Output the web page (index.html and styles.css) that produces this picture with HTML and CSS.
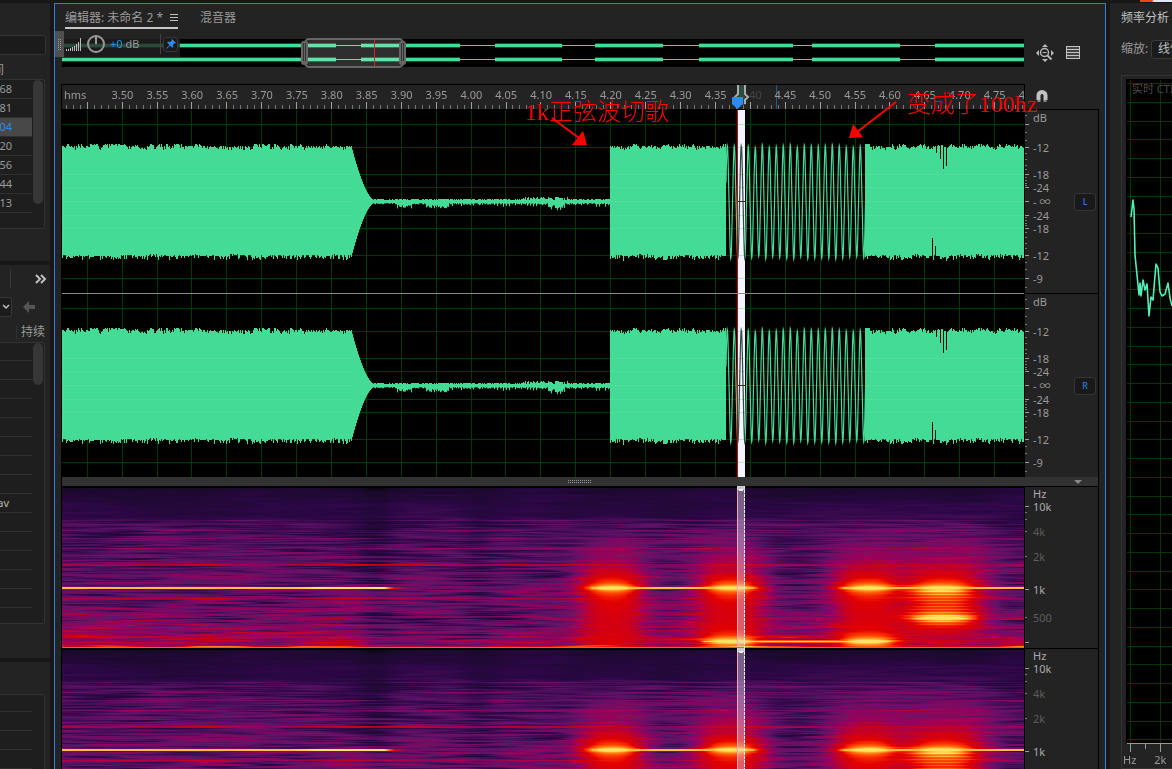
FILE: index.html
```html
<!DOCTYPE html>
<html lang="zh-CN">
<head>
<meta charset="utf-8">
<title>编辑器</title>
<link rel="stylesheet" href="styles.css">
</head>
<body>
<div class="workspace">
  <aside class="side">
    <section class="panel files">
      <input class="search" type="text" aria-label="搜索">
      <div class="files-head">间</div>
      <div class="box file-box">
        <table class="rows">
          <tbody>
            <tr><td><div class="num">68</div></td></tr>
            <tr><td><div class="num">81</div></td></tr>
            <tr class="selected"><td><div class="num">04</div></td></tr>
            <tr><td><div class="num">20</div></td></tr>
            <tr><td><div class="num">456</div></td></tr>
            <tr><td><div class="num">444</div></td></tr>
            <tr><td><div class="num">13</div></td></tr>
          </tbody>
        </table>
        <div class="thumb"></div>
      </div>
    </section>
    <section class="panel media">
      <div class="media-tabs"><button class="icon-btn" aria-label="更多"><svg width="12" height="10" viewBox="0 0 12 10"><path d="M1 1l4 4-4 4M6 1l4 4-4 4" fill="none" stroke="#c0c0c0" stroke-width="2"/></svg></button></div>
      <div class="media-tools">
        <button class="drop" aria-label="驱动器"><svg width="8" height="6" viewBox="0 0 8 6"><path d="M1 1l3 3 3-3" fill="none" stroke="#c0c0c0" stroke-width="1.5"/></svg></button>
        <button class="icon-btn" aria-label="后退"><svg width="12" height="12" viewBox="0 0 12 12"><path d="M0 6l6-6v4h6v4H6v4z" fill="#555"/></svg></button>
      </div>
      <div class="media-head"><span>持续时间</span></div>
      <div class="box media-box">
        <table class="rows">
          <tbody>
            <tr><td></td></tr><tr><td></td></tr><tr><td></td></tr><tr><td></td></tr>
            <tr><td></td></tr><tr><td></td></tr><tr><td></td></tr><tr><td></td></tr>
            <tr><td><div class="num bright">av</div></td></tr>
            <tr><td></td></tr><tr><td></td></tr><tr><td></td></tr><tr><td></td></tr><tr><td></td></tr>
          </tbody>
        </table>
        <div class="thumb short"></div>
      </div>
    </section>
    <section class="panel history">
      <div class="box history-box">
        <table class="rows"><tbody><tr><td></td></tr><tr><td></td></tr><tr><td></td></tr><tr><td></td></tr><tr><td></td></tr></tbody></table>
      </div>
    </section>
  </aside>

  <main class="editor">
    <nav class="tabs">
      <div class="tab active"><button class="tab-name">编辑器: 未命名 2 *</button><button class="icon-btn" aria-label="菜单"><svg width="8" height="8" viewBox="0 0 8 8"><path d="M0 .5h8M0 3.5h8M0 6.5h8" stroke="#bdbdbd"/></svg></button></div>
      <button class="tab-name">混音器</button>
    </nav>

    <div class="overview-row">
      <canvas class="overview" id="overview"></canvas>
      <div class="overview-tools">
        <button class="icon-btn" aria-label="全部缩小"><svg width="18" height="18" viewBox="0 0 18 18"><path d="M9 0l3 3H6zM9 18l3-3H6zM0 9l3-3v6zM18 9l-3-3v6z" fill="#b8b8b8"/><circle cx="8.500" cy="8.500" r="4" fill="none" stroke="#b8b8b8" stroke-width="1.400"/><path d="M6.500 8.500h4" stroke="#b8b8b8"/><path d="M11.500 11.500l4 4" stroke="#b8b8b8" stroke-width="2"/></svg></button>
        <button class="icon-btn" aria-label="频谱显示"><svg width="14" height="14" viewBox="0 0 14 14"><rect x=".5" y=".5" width="13" height="12" fill="#444" stroke="#c4c4c4"/><path d="M1 3.500h12M1 6.500h12M1 9.500h12" stroke="#c4c4c4"/></svg></button>
      </div>
    </div>

    <div class="ruler-row">
      <div class="ruler">
        <canvas class="fill" id="ruler"></canvas>
        <span class="unit">hms</span>
        <div class="times" id="times"></div>
      </div>
      <button class="icon-btn magnet" aria-label="吸附"><svg width="12" height="13" viewBox="0 0 12 13"><path d="M2.500 10V5.500a3.500 3.500 0 0 1 7 0V10" fill="none" stroke="#c2c2c2" stroke-width="4"/><path d="M1.500 11h3M7.500 11h3" stroke="#888" stroke-width="2"/></svg></button>
    </div>

    <div class="stage">
      <div class="channel">
        <canvas class="wave" data-wave="11"></canvas>
        <div class="scale">
          <canvas class="ticks" data-ticks="db"></canvas>
          <ol class="db"><li>dB</li><li>-12</li><li>-18</li><li>-24</li><li>- ∞</li><li>-24</li><li>-18</li><li>-12</li><li>-9</li></ol>
          <button class="chan left">L</button>
        </div>
      </div>
      <div class="channel">
        <canvas class="wave" data-wave="11"></canvas>
        <div class="scale">
          <canvas class="ticks" data-ticks="db"></canvas>
          <ol class="db"><li>dB</li><li>-12</li><li>-18</li><li>-24</li><li>- ∞</li><li>-24</li><li>-18</li><li>-12</li><li>-9</li></ol>
          <button class="chan">R</button>
        </div>
      </div>
      <div class="splitter"><i class="grip"></i><svg width="8" height="4" viewBox="0 0 8 4"><path d="M0 0h8L4 4z" fill="#888"/></svg></div>
      <div class="channel spectral">
        <canvas class="spectrum"></canvas>
        <div class="scale">
          <canvas class="ticks" data-ticks="hz"></canvas>
          <ol class="hz"><li>Hz</li><li>10k</li><li class="dim">4k</li><li class="dim">2k</li><li>1k</li><li class="dim">500</li></ol>
        </div>
      </div>
      <div class="channel spectral">
        <canvas class="spectrum"></canvas>
        <div class="scale">
          <canvas class="ticks" data-ticks="hz"></canvas>
          <ol class="hz"><li>Hz</li><li>10k</li><li class="dim">4k</li><li class="dim">2k</li><li>1k</li><li class="dim">500</li></ol>
        </div>
      </div>
    </div>

    <div class="hud">
      <i class="hud-grip"></i>
      <svg width="17" height="15" viewBox="0 0 17 15"><path d="M1.500 14v-2M3.500 14v-2M5.500 14v-3M7.500 14v-4M9.500 14V9M11.500 14V7M13.500 14V5M15.500 14V1" stroke="#bcbcbc" stroke-width="1"/></svg>
      <svg width="20" height="20" viewBox="0 0 20 20"><circle cx="10" cy="10" r="8" fill="none" stroke="#989898" stroke-width="2"/><path d="M10 2v8" stroke="#989898" stroke-width="2"/></svg>
      <span class="gain"><b>+0</b> dB</span>
      <button class="pin" aria-label="固定"><svg width="10" height="10" viewBox="0 0 10 10"><path d="M6 0l4 4-1 .5-.7-.2L7 6l.2 2-.8.8L4 6.500 1 9.500 0 10 .5 9l3-3L1.200 3.600 2 2.800 4 3l1.700-1.300L5.500 1z" fill="#2d8ceb"/></svg></button>
    </div>

    <div class="note first">1k正弦波切歌</div>
    <div class="note second">变成了100hz</div>
    <svg class="arrow one" width="36" height="30" viewBox="0 0 36 30"><path d="M1 2l27 20" stroke="#f00" stroke-width="2"/><path d="M36 29H21L32 15z" fill="#f00"/></svg>
    <svg class="arrow two" width="48" height="40" viewBox="0 0 48 40"><path d="M47 2L8 32" stroke="#f00" stroke-width="2"/><path d="M0 38L4 24l10 13z" fill="#f00"/></svg>
  </main>

  <aside class="analysis">
    <h2>频率分析</h2>
    <div class="zoom"><label for="zoom">缩放:</label><select id="zoom"><option>线性</option></select></div>
    <div class="graph">
      <canvas class="fill" id="freq"></canvas>
      <span class="live">实时 CTI</span>
      <div class="graph-axis"><span>Hz</span><span>2k</span></div>
    </div>
  </aside>
  <div class="behind"></div>
</div>
<script src="app.js"></script>
</body>
</html>
```
FILE: styles.css
```css
* { box-sizing: border-box; }
body {
  margin: 0;
  background: #171717;
  color: #9a9a9a;
  font: 12px/16px "Noto Sans", "Noto Sans CJK SC", sans-serif;
  overflow: hidden;
}
button, input, select { font: inherit; color: inherit; margin: 0; padding: 0; border: 0; background: none; }
canvas, svg { display: block; }
.icon-btn { display: grid; place-items: center; }

.workspace {
  position: relative;
  display: grid;
  grid-template-columns: 50px minmax(0, 1fr) 62px;
  column-gap: 4px;
  height: 100vh;
  padding-top: 3px;
}
.behind {
  position: absolute;
  top: 0;
  right: 0;
  width: 32px;
  height: 2px;
  background: linear-gradient(90deg, #e8480c 12px, #dfe6f2 14px);
}

/* left column */
.side { display: flex; flex-direction: column; gap: 4px; overflow: hidden; }
.panel { background: #232323; flex: none; overflow: hidden; }
.box {
  position: relative;
  width: 45px;
  overflow: hidden;
  background: #1e1e1e;
  border: 1px solid #333;
  border-left: 0;
  border-radius: 0 3px 3px 0;
}
.files { height: 258px; padding-top: 32px; }
.search {
  display: block;
  width: 46px;
  height: 20px;
  background: #1b1b1b;
  border: 1px solid #333;
  border-left: 0;
  border-radius: 0 3px 3px 0;
}
.files-head { width: 45px; height: 19px; margin-top: 5px; line-height: 19px; border-right: 1px solid #1e1e1e; text-indent: -8px; }
.file-box { height: 150px; }
.rows { width: 32px; border-collapse: collapse; }
.rows td { height: 19px; padding: 0; border-bottom: 1px solid #2f2f2f; }
.file-box .rows tr:first-child td { height: 18px; }
.num { display: flex; justify-content: flex-end; width: 12px; font-size: 11px; line-height: 16px; }
.num.bright { width: 9px; color: #b8b8a8; }
.selected { background: #484848; color: #2d8ceb; }
.thumb { position: absolute; top: 0; right: 1px; width: 10px; height: 124px; border-radius: 5px; background: #373737; }
.thumb.short { height: 42px; }

.media { height: 393px; padding-top: 4px; }
.media-tabs { display: flex; justify-content: flex-end; height: 19px; width: 37px; margin-left: 10px; border-left: 1px solid #383838; }
.media-tools { display: flex; align-items: center; gap: 11px; height: 20px; margin-top: 9px; }
.drop { display: grid; place-items: center; width: 12px; height: 20px; background: #1b1b1b; border: 1px solid #383838; border-left: 0; border-radius: 0 3px 3px 0; }
.media-head { width: 29px; height: 14px; margin: 8px 0 0 16px; padding-left: 4px; border-left: 1px solid #303030; line-height: 14px; overflow: hidden; white-space: nowrap; }
.media-box { height: 282px; margin-top: 3px; }
.media-box .rows tr:first-child td { height: 17px; }
.history { flex: 1; padding-top: 32px; }
.history-box { height: 120px; }
.history-box .rows tr:first-child td { height: 16px; }

/* editor */
.editor {
  position: relative;
  min-width: 0;
  overflow: hidden;
  background: #232323;
  border: 1px solid #2f80dc;
  border-bottom: 0;
  padding: 0 6px;
}
.tabs { display: flex; align-items: flex-start; gap: 22px; height: 35px; padding: 4px 0 0 4px; }
.tab { display: flex; gap: 7px; height: 21px; border-bottom: 2px solid #c8c8c8; }
.tab-name { line-height: 20px; height: 20px; white-space: nowrap; }
.tabs .icon-btn { height: 20px; }
.overview-row { display: flex; height: 28px; padding-left: 1px; }
.overview { flex: 1; min-width: 0; height: 30px; margin-top: -1px; }
.overview-tools { display: flex; align-items: center; gap: 12px; width: 75px; padding-left: 12px; }
.ruler-row { display: flex; margin-top: 17px; }
.ruler { position: relative; flex: 1; min-width: 0; height: 25px; overflow: hidden; border: 1px solid #000; border-bottom: 0; }
.fill { position: absolute; inset: 0; width: 100%; height: 100%; }
.unit { position: absolute; left: 2px; top: 2px; font-size: 11px; }
.times { position: relative; display: grid; grid-auto-flow: column; grid-auto-columns: 1fr; margin: 2px -23px 0 43px; font-size: 11px; text-align: center; }
.times .muted { color: #444; padding-left: 10px; }
.magnet { width: 74px; padding-right: 40px; }

.stage { border-left: 1px solid #000; border-right: 1px solid #000; }
.channel { display: flex; height: 184px; }
.wave, .spectrum { flex: 1; min-width: 0; height: 100%; }
.scale { position: relative; width: 74px; border-top: 1px solid #000; border-left: 1px solid #000; }
.ticks { position: absolute; left: 0; top: -1px; width: 5px; height: 184px; }
.spectral .ticks { height: 162px; }
.db, .hz { display: grid; align-items: center; margin: -1px 0 0; padding: 0 0 0 8px; list-style: none; font-size: 11px; line-height: 14px; }
.db { grid-template-rows: 18px 42px 12px 14px 14px 14px 12px 42px 4px; }
.hz { grid-template-rows: 16px 10px 40px 10px 56px 0px; color: #aaa; }
.db li, .hz li { height: 14px; }
.hz li { margin: -2px 0; }
.hz .dim { color: #5c5c5c; }
.chan { position: absolute; top: 83px; right: 2px; width: 22px; height: 18px; border: 1px solid #353535; border-radius: 3px; background: #191919; color: #2d8ceb; font-size: 9px; line-height: 16px; }
.splitter { position: relative; display: flex; align-items: center; justify-content: flex-end; height: 9px; padding-right: 16px; background: #323232; }
.grip, .hud-grip::before {
  position: absolute;
  background: repeating-linear-gradient(90deg, #999 0 1px, transparent 1px 2px);
  -webkit-mask: repeating-linear-gradient(#000 0 1px, transparent 1px 2px);
  mask: repeating-linear-gradient(#000 0 1px, transparent 1px 2px);
}
.grip { left: calc(50% - 12px); top: 3px; width: 24px; height: 3px; }
.spectral { height: 162px; }

.hud { position: absolute; left: 0; top: 27px; display: flex; align-items: center; width: 125px; height: 26px; background: rgba(35, 35, 35, .78); }
.hud-grip { position: relative; align-self: stretch; width: 9px; margin-right: 1px; background: #505050; }
.hud-grip::before { content: ""; left: 3px; top: 8px; width: 3px; height: 11px; }
.gain { flex: 1; margin-left: 4px; font-size: 11px; white-space: nowrap; border-right: 1px solid #444; line-height: 20px; }
.gain b { font-weight: 400; color: #2d8ceb; }
.pin { display: grid; place-items: center; width: 15px; height: 15px; margin: 0 2px; border: 1px solid #383838; border-radius: 3px; background: #1b1b1b; }
.hud svg:nth-of-type(2) { margin-left: 4px; }

.note { position: absolute; color: #f00; font: 300 24px/28px "Liberation Serif", "Noto Sans CJK SC", serif; white-space: nowrap; }
.note.first { left: 470px; top: 94px; }
.note.second { left: 852px; top: 86px; }
.arrow { position: absolute; }
.arrow.one { left: 496px; top: 112px; }
.arrow.two { left: 794px; top: 96px; }

/* right column */
.analysis { display: flex; flex-direction: column; overflow: hidden; background: #232323; padding-left: 11px; }
.analysis h2 { margin: 7px 0 0; font: inherit; color: #c0c0c0; white-space: nowrap; }
.zoom { display: flex; align-items: center; height: 20px; margin-top: 13px; white-space: nowrap; }
.zoom label { flex: none; width: 30px; }
.zoom select { flex: none; width: 60px; height: 19px; padding-left: 6px; border: 1px solid #3a3a3a; border-radius: 3px; background: #1b1b1b; color: #c0c0c0; appearance: none; }
.graph { position: relative; flex: 1; margin-top: 16px; border: solid #333; border-width: 1px 0 1px 1px; overflow: hidden; }
.live { position: absolute; left: 10px; top: 5px; color: #4c4c4c; font-size: 11px; white-space: nowrap; }
.graph-axis { position: absolute; left: 1px; bottom: 0; display: flex; gap: 18px; font-size: 11px; line-height: 16px; }
```
FILE: app.js
```js
const GREEN = '#44db97';
const SPAN = 962;      // timeline units across the view
const STEP = 34.9;     // units per 0.05 s
const FIRST = 24.7;    // first major division

function noise(n) {
  const s = Math.sin(n * 127.1 + 11.7) * 43758.5453;
  return s - Math.floor(s);
}
function hash(x, y) {
  let h = (Math.imul(x, 374761393) + Math.imul(y, 668265263)) | 0;
  h = Math.imul(h ^ (h >>> 13), 1274126177);
  return ((h ^ (h >>> 16)) >>> 0) / 4294967296;
}
function openCanvas(canvas, span) {
  canvas.width = canvas.clientWidth;
  canvas.height = canvas.clientHeight;
  const c = canvas.getContext('2d');
  if (span) c.scale(canvas.width / span, 1);
  c.rect2 = (color, x, y, w, h) => { c.fillStyle = color; c.fillRect(x, y, w, h); };
  return c;
}

function drawOverview() {
  const c = openCanvas(document.getElementById('overview'), SPAN);
  c.rect2('#000', 0, 1, SPAN, 28);
  const thick = [[0, 274], [299, 398], [433, 500], [533, 601], [637, 731], [750, 838], [873, 962]];
  for (const y of [7, 21]) {
    c.rect2(GREEN, 0, y, SPAN, 1);
    for (const [a, b] of thick) {
      c.rect2('#174b35', a, y - 2, b - a, 5);
      c.rect2(GREEN, a, y - 1, b - a, 3);
    }
  }
  c.fillStyle = 'rgba(255,255,255,.18)';
  c.beginPath(); c.roundRect(243, 1, 98, 28, 4); c.fill();
  c.strokeStyle = '#666'; c.lineWidth = 2; c.stroke();
  for (const x of [240, 338]) {
    c.fillStyle = '#666';
    c.beginPath(); c.roundRect(x - 1, 3, 7, 24, 3); c.fill();
    c.rect2('#333', x + 1, 5, 1, 18);
    c.rect2('#333', x + 3, 5, 1, 18);
  }
  c.rect2('#d22', 312, 2, 1, 26);
}

function drawRuler() {
  const c = openCanvas(document.getElementById('ruler'), SPAN);
  for (let i = 0; i < 140; i++) {
    const x = Math.round(FIRST - STEP + i * STEP / 5);
    const major = i % 5 === 0;
    c.rect2(major ? '#a0a0a0' : '#777', x, major ? 17 : 20, 1, major ? 7 : 4);
  }
  c.rect2('#2b4a40', 676, 0, 7, 20);
  c.strokeStyle = '#a9aca9'; c.lineWidth = 2;
  c.beginPath();
  c.moveTo(676, 0); c.lineTo(676, 9); c.lineTo(673, 12); c.lineTo(676, 15);
  c.moveTo(683, 0); c.lineTo(683, 9); c.lineTo(686, 12); c.lineTo(683, 15); c.lineTo(683, 19);
  c.stroke();
  c.fillStyle = '#2d8ceb';
  c.beginPath(); c.moveTo(670, 12); c.lineTo(681, 12); c.lineTo(681, 19); c.lineTo(675.5, 24); c.lineTo(670, 19); c.fill();
  c.rect2('#23588f', 714, 0, 1, 24);
}

function drawWave(canvas) {
  const c = openCanvas(canvas, SPAN);
  const rows = [15, 38, 65, 78, 106, 119, 146, 169];
  const seed = +canvas.dataset.wave;
  c.rect2('#000', 0, 0, SPAN, 184);
  for (const y of rows) c.rect2('#003a00', 0, y, SPAN, 1);
  for (let i = 0; i < 28; i++) c.rect2('#003a00', Math.round(FIRST + i * STEP), 0, 1, 184);
  c.rect2('#900', 664, 92, 140, 1);
  for (let x = 0; x < SPAN; x++) {
    const a = noise(x + seed), b = noise(x * 1.7 + seed + 500);
    let top, bottom;
    if (x < 289 || (x >= 548 && x < 664) || x >= 803) {
      top = 37 + Math.round(a * a * 4 - (noise(x >> 2) > .6 ? 2 : 0));
      bottom = 145 + Math.round(b * b * 5 + noise((x >> 3) + 9) * 2);
      if (x >= 803 && x < 806) top = 35;
    } else if (x < 312) {
      const t = Math.min(1, (312 - x) / 23);
      const amp = 54 * Math.pow(t, 1.65) + 1;
      top = 92 - amp; bottom = 93 + amp;
    } else if (x < 548) {
      const blob = (x > 334 && x < 350) || (x > 363 && x < 387) || (x > 486 && x < 503);
      const fray = x > 387 && x % 3 === 0;
      top = 91 - Math.round(a * (x > 505 || x < 460 ? 1.4 : 3));
      bottom = 94 + (blob ? 2 + a * 2 : 0) + (fray ? a * 4 : a * 1.5);
    } else continue;
    c.rect2(GREEN, x, top, 1.05, bottom - top);
  }
  for (const y of [65, 78, 92, 106, 119]) {
    for (const [a, w] of [[0, 290], [548, 116], [803, 159]]) c.rect2('rgba(255,255,150,.08)', a, y, w, 1);
  }
  for (const [x, y, h] of [[874, 36, 8], [878, 36, 14], [881, 36, 24], [884, 36, 21], [870, 129, 24], [873, 137, 15]]) c.rect2('#001008', x, y, 1, h);

  const pulse = color => {
    c.strokeStyle = color; c.lineWidth = 1.2; c.beginPath();
    for (let x = 664; x <= 804; x += .25) {
      const v = Math.cos((x - 672.3) / 7 * Math.PI * 2);
      const shaped = Math.sign(v) * Math.pow(Math.abs(v), 1.15);
      c.lineTo(x, 93 - shaped * (54 + noise(Math.floor((x - 672) / 7)) * 3));
    }
    c.stroke();
  };
  pulse(GREEN);
  c.save(); c.beginPath(); c.rect(676, 0, 7, 184); c.clip();
  c.rect2('#f5f5ff', 676, 1, 7, 183);
  for (const y of rows) c.rect2('#c6dfca', 676, y, 7, 1);
  c.rect2('#700', 676, 92, 7, 1);
  pulse('#2b4a44');
  c.restore();
  c.rect2('#c00', 675, 1, 1, 183);
  c.rect2(canvas === document.querySelector('.wave') ? '#000' : '#8a8a8a', 0, 0, SPAN, 1);
}

const stops = [[0, 0, 0, 0], [.08, 23, 10, 38], [.2, 44, 7, 70], [.35, 98, 18, 104], [.5, 158, 0, 88], [.62, 200, 0, 30], [.7, 226, 0, 0], [.78, 255, 62, 0], [.86, 255, 146, 30], [.93, 255, 222, 82], [1, 255, 240, 140]];
function heat(v) {
  v = Math.max(0, Math.min(.95, v));
  let i = 1;
  while (v > stops[i][0]) i++;
  const a = stops[i - 1], b = stops[i], t = (v - a[0]) / (b[0] - a[0]);
  return [a[1] + (b[1] - a[1]) * t, a[2] + (b[2] - a[2]) * t, a[3] + (b[3] - a[3]) * t];
}
function streak(x, y, len) {
  const p = (x + hash(y, 7) * 400) / len, i = Math.floor(p), t = p - i, s = t * t * (3 - 2 * t);
  return hash(i, y) * (1 - s) + hash(i + 1, y) * s;
}
const ramp = (v, a, b) => Math.max(0, Math.min(1, (v - a) / (b - a)));
const bell = (d, p = 2) => Math.exp(-Math.pow(Math.abs(d), p));
const tones = { 34: .07, 38: .08, 44: .09, 52: .1, 62: .16, 78: .23, 79: .2, 111: .1, 112: .16, 141: .08, 150: .1, 151: .1, 159: .12, 160: .26 };
function level(x, y) {
  if (y < 2) return 0;
  const depth = ramp(y, 28, 40);
  let v = .12 + .07 * ramp(y, 2, 20) + .06 * depth + .08 * ramp(y, 40, 90) + .06 * ramp(y, 100, 130) + .1 * ramp(y, 136, 152);
  const rough = .03 + .08 * depth + .08 * ramp(y, 50, 130);
  v += (streak(x, y, 34) - .5) * rough * 1.2 + (streak(x, (y >> 1) + 900, 46) - .5) * rough * 1.1;
  v += (streak(x, (y >> 4) + 1900, 60) - .5) * .06;
  if (tones[y]) v += tones[y] * (.6 + .6 * streak(x, y + 3000, 80));
  v -= (.05 + .03 * depth) * bell((x - 313) / 18) + (.03 + .04 * depth) * bell((x - 417) / 17);
  v -= .08 * ramp(x, 300, 330) * (1 - ramp(x, 440, 520)) * ramp(y, 105, 140);

  const main = Math.abs(y - 101.5);
  for (const [cx, w] of [[550, 36], [668, 38], [805, 38], [880, 46]]) {
    const dx = Math.abs(x - cx) / w;
    if (dx > 1.7) continue;
    const body = bell(dx, 3);
    const vert = y < 101 ? bell(main / 38, 1.8) : cx === 880 ? 1 - ramp(y, 138, 157) * .5 : .98;
    v += body * vert * Math.max(0, .67 - v) * .97;
    v += .22 * Math.exp(-main / 9) * bell(dx * 1.1) + .14 * Math.exp(-main / 2.5) * bell(dx, 4);
  }
  if (y > 103 && y < 146) v += bell((x - 880) / 42, 4) * .11 * (y % 3 === 0 ? 1 : .45) * (1 - ramp(y, 135, 146));
  const d5 = Math.abs(y - 131.5);
  v += .32 * Math.exp(-d5 / 4) * bell((x - 880) / 36);
  if (d5 < 1.6) v = Math.max(v, .92 * bell((x - 880) / 50, 4));
  const low = Math.abs(y - 155);
  for (const cx of [668, 805]) v += .34 * Math.exp(-low / 6) * bell((x - cx) / 32, 3);
  if (low < 1.6) v = Math.max(v, (low < .6 ? .93 : .8) * ramp(x, 620, 642) * (1 - ramp(x, 827, 846)));
  if (main < 1) {
    const on = Math.max(1 - ramp(x, 318, 348), ramp(x, 508, 530) * (1 - ramp(x, 690, 710)), ramp(x, 760, 782));
    v = Math.max(v, .35 + .55 * on);
  }
  return v + .3 * Math.exp(-main / 1.5) * bell((x - 295) / 32);
}
function drawSpectrum(canvas) {
  const c = openCanvas(canvas);
  const w = canvas.width, h = canvas.height, img = c.createImageData(w, h);
  for (let y = 0; y < h; y++) for (let x = 0; x < w; x++) {
    const u = Math.floor(x / w * SPAN), [r, g, b] = heat(level(u, y)), o = (y * w + x) * 4;
    img.data[o] = r; img.data[o + 1] = g; img.data[o + 2] = b; img.data[o + 3] = 255;
  }
  c.putImageData(img, 0, 0);
  c.scale(w / SPAN, 1);
  c.rect2('#8a8080', 0, h - 1, SPAN, 1);
  c.rect2('rgba(225,215,235,.43)', 676, 0, 7, h - 1);
  c.rect2('#f6a8b4', 675, 0, 1, h - 1);
  for (let y = 0; y < h; y += 4) c.rect2('#eee', 682, y, 1, 3);
  c.rect2('rgba(225,225,230,.8)', 675, 0, 8, 4);
  c.rect2('#eee', 677, 3, 4, 2);
}

function drawTicks(canvas) {
  const c = openCanvas(canvas);
  const db = canvas.dataset.ticks === 'db';
  const major = db ? [15, 38, 65, 78, 92, 106, 119, 146, 169] : [20, 103, 156];
  const minor = db ? [6, 23, 31, 44, 50, 56, 60, 68, 71, 74, 76, 108, 111, 114, 116, 123, 128, 134, 139, 153, 160, 178] : [26, 33, 45, 70, 131];
  for (const y of minor) c.rect2('#777', 0, y, 2, 1);
  for (const y of major) c.rect2('#999', 0, y, 4, 1);
}

function drawFrequency() {
  const canvas = document.getElementById('freq'), c = openCanvas(canvas);
  const w = canvas.width, end = canvas.height - 25;
  c.rect2('#000', 4, 3, w, end - 3);
  for (const x of [8, 38]) c.rect2('#003a00', x, 4, 1, end - 4);
  for (let y = 7; y < end; y += 18.75) c.rect2('#003a00', 5, Math.round(y), w, 1);
  c.rect2('#999', 5, end, w, 1);
  for (const [x, h] of [[8, 9], [23, 6], [38, 9]]) c.rect2('#999', x, end, 1, h);
  c.strokeStyle = '#52f0b8'; c.lineWidth = 1.6; c.lineJoin = 'round'; c.beginPath();
  [[9, 141], [11, 124], [12, 133], [13, 179], [15, 199], [17, 219], [18, 207], [19, 220], [21, 204], [23, 214], [25, 208], [27, 240], [29, 221], [31, 224], [34, 188], [36, 192], [38, 216], [40, 220], [43, 218], [46, 207], [48, 222], [50, 230]].forEach(([x, y]) => c.lineTo(x, y));
  c.stroke();
}

const times = document.getElementById('times');
for (let i = 0; i < 27; i++) {
  const label = document.createElement('span');
  label.textContent = (3.5 + i * .05).toFixed(2);
  if (i === 18) { label.textContent = '40'; label.className = 'muted'; }
  times.append(label);
}
function draw() {
  drawOverview();
  drawRuler();
  document.querySelectorAll('.wave').forEach(drawWave);
  document.querySelectorAll('.spectrum').forEach(drawSpectrum);
  document.querySelectorAll('.ticks').forEach(drawTicks);
  drawFrequency();
}
draw();
addEventListener('resize', draw);
```
